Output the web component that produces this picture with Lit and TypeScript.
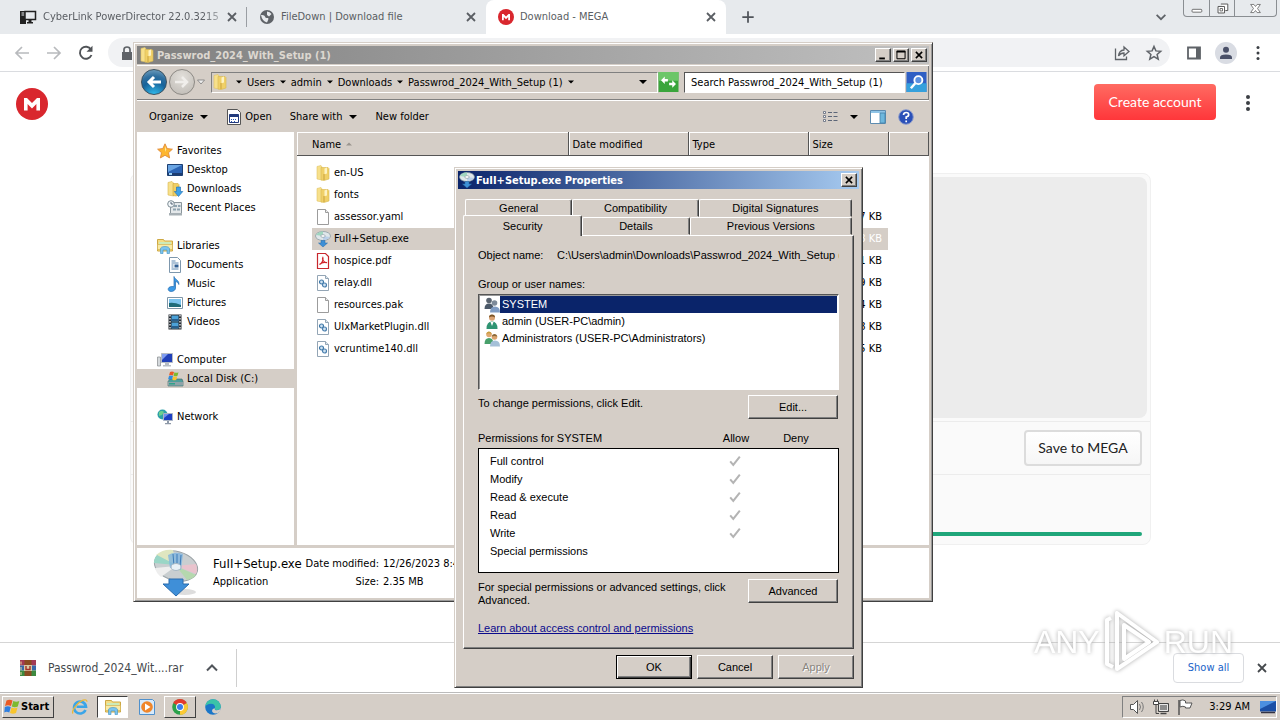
import { LitElement, html, css, svg, TemplateResult } from "lit";
import { customElement } from "lit/decorators.js";
import { classMap } from "lit/directives/class-map.js";

const shape = (name: string) => {
  switch (name) {
    case "folder":
      return svg`<path d="M2 1.500 6 .5 7 2v13l-5-1z" fill="#f7e08b" stroke="#e0c566" stroke-width=".6"/><path d="M6 2.500h7l1 1V14l-5 1.500-3-.5z" fill="#f0d068" stroke="#d8b850" stroke-width=".6"/><path d="M9.500 3.500 12 2.500v6l-2.500.8z" fill="#fdf3c4"/><path d="M9 9v6" stroke="#b98f2c" stroke-width=".7"/>`;
    case "file":
      return svg`<path d="M2.500.5h8l3 3v12h-11z" fill="#fff" stroke="#9c9c9c"/><path d="M10.500.5v3h3" fill="#eee" stroke="#9c9c9c"/>`;
    case "dll":
      return svg`<path d="M2.500.5h8l3 3v12h-11z" fill="#fff" stroke="#93a5b5"/><path d="M10.500.5v3h3" fill="#dfe8ef" stroke="#93a5b5"/><circle cx="6.500" cy="7" r="2" fill="#cfe2f2" stroke="#3f78a8" stroke-width="1.200"/><circle cx="9.500" cy="10" r="2" fill="#cfe2f2" stroke="#4a7fae" stroke-width="1.200"/>`;
    case "pdf":
      return svg`<path d="M2.500.5h8l3 3v12h-11z" fill="#fff" stroke="#c8272d" stroke-width="1.200"/><path d="M4.500 11.500c3-1.500 4-5 3.300-7-.9 1.200.5 5.200 4.200 5.200-2.500-.8-5.500-.2-7.500 1.800z" fill="none" stroke="#d2232a" stroke-width="1.200"/>`;
    case "disc":
      return svg`<ellipse cx="8" cy="5" rx="7.500" ry="4.500" fill="#dfe7ea" stroke="#83949c" stroke-width=".7"/><path d="M1 4q3-4 7-3.500L8 5z" fill="#9fd6bf"/><path d="M15 6q-3 3.500-7 3.200L8 5z" fill="#b9cfe9"/><ellipse cx="8" cy="5" rx="2.200" ry="1.400" fill="#fff" stroke="#7c8f99" stroke-width=".6"/><path d="M6 9.500h4v2.500h2.500L8 16l-4.500-4H6z" fill="#3d8fd6" stroke="#2768a6" stroke-width=".5"/>`;
    case "star":
      return svg`<path d="m8 .8 2.200 4.800 5.200.6-3.900 3.500 1.100 5.200L8 12.300l-4.600 2.600 1.100-5.200L.6 6.200l5.200-.6z" fill="#fdb62f" stroke="#e08a3a" stroke-width=".9"/><path d="m8 3 1.200 3.500L8 9z" fill="#ffe9a3"/>`;
    case "desktop":
      return svg`<path d="M.5 2.500h15v11H.5z" fill="#2c64b4" stroke="#1c3f72"/><path d="M1 3h14L1 10z" fill="#6aa5e3"/><path d="M1 11h14v2H1z" fill="#1d3c70"/><path d="M2 11h3v2H2z" fill="#9ad0f5"/>`;
    case "downloads":
      return svg`<path d="M1 1.500 5 .5 6.500 2v13L1 14z" fill="#f7e08b" stroke="#d9b64a" stroke-width=".6"/><path d="M6 2.500h5l1 1V14l-3 1-3-.5z" fill="#f0cf63" stroke="#cfa63a" stroke-width=".6"/><path d="M9.500 6h4v4.500h2.300L11.500 15.500 7.300 10.500h2.200z" fill="#3fa2e8" stroke="#1b6cb0" stroke-width=".6"/>`;
    case "recent":
      return svg`<path d="M3.500 2.500h11v11h-11z" fill="#e4e8ea" stroke="#8a959b"/><path d="M2 13h13v2.500H2z" fill="#a7b0b5"/><path d="M7 5h3v2H7zM11 5h2.500v2H11zM6 8.500h3v2H6zM10 8.500h3v2h-3z" fill="#8fa3af"/><circle cx="4" cy="4" r="3.300" fill="#f2f7fa" stroke="#7e8c94"/><path d="M4 2v2h2" stroke="#345" fill="none" stroke-width=".8"/>`;
    case "libraries":
      return svg`<path d="M.5 1.500h6l1 1.500h8v10H.5z" fill="#f5dc84" stroke="#cda844"/><path d="M2 4h12v3H2z" fill="#cdebb9"/><path d="M.5 6.500h15v5H.5z" fill="#faeaa6" stroke="#d3b355" stroke-width=".7"/><path d="M3.500 15.500V11q0-2.500 4.500-2.500t4.500 2.500v4.500H10V12H6v3.500z" fill="#7cc4ee" stroke="#3c92c4" stroke-width=".6"/>`;
    case "documents":
      return svg`<path d="M2.500.5h8l3 3v12h-11z" fill="#fff" stroke="#7d97ad"/><path d="M4.500 4h4M4.500 6h7M4.500 8h2M4.500 10h2M4.500 12h7" stroke="#5c87b0"/><path d="M7.500 7.500h4v3h-4z" fill="#315f93"/>`;
    case "music":
      return svg`<path d="M7 .5c.5 3 5.500 3.500 4.800 8-.6-2-2-2.700-3.300-3V12c0 2-2 3.500-4.300 3.500S.8 14 1.300 12.500 4 10 7 10.700z" fill="#3b9ae6" stroke="#1f68b0" stroke-width=".7"/>`;
    case "pictures":
      return svg`<path d="M.5 2.500h15v11H.5z" fill="#fff" stroke="#7f96a8"/><path d="M2 4h12v8H2z" fill="#7cc4ee"/><path d="M2 8q5-1 12 2v2H2z" fill="#1e6b79"/>`;
    case "videos":
      return svg`<path d="M1.500.5h13v15h-13z" fill="#262c33"/><path d="M4.500 1.500h7v6h-7zM4.500 8.500h7v6h-7z" fill="#4ba1d8"/><path d="M4.500 5h7v2h-7zM4.500 12h7v2h-7z" fill="#285f8d"/><path d="M3 1v14M13 1v14" stroke="#fff" stroke-dasharray="1.500 1.500" stroke-width="1.200"/>`;
    case "computer":
      return svg`<path d="M.5 5h3v9h-3z" fill="#d5d9dc" stroke="#85898d" stroke-width=".7"/><path d="M4.500 1.500h11v9h-11z" fill="#2140b8" stroke="#b6bcc4"/><path d="M5 2h6L5 8z" fill="#7f9cf0"/><path d="M8 11h4v2h2v1.500H6V13h2z" fill="#b8bec5"/>`;
    case "disk":
      return svg`<path d="M1 10.500 3 8h12l1 2.500V15H1z" fill="#4f9e9c" stroke="#3c6467" stroke-width=".6"/><path d="M1 11h15v3.500H1z" fill="#8fa3a8"/><path d="M2 12h6v1.500H2z" fill="#2fa38b"/><path d="M3 1q2-1 4 0L6 4.500q-2-1-4 0z" fill="#ea5a24"/><path d="M7.500 1.200q2 1 4 0l-1 3.500q-2 1-4 0z" fill="#7dba2f"/><path d="M2 5q2-1 4 0L5 8.500q-2-1-4 0z" fill="#2f8ce0"/><path d="M6.300 5.200q2 1 4 0l-1 3.500q-2 1-4 0z" fill="#f8c42c"/>`;
    case "network":
      return svg`<circle cx="5.500" cy="5.500" r="5" fill="#2da0a8"/><path d="M2 3q3-2 5 0L5 6 2 7zM6 8l3-1v3z" fill="#6dd08e"/><path d="M6.500 4.500h9v7h-9z" fill="#1d3fc4" stroke="#aab4c4"/><path d="M7 5h5L7 9z" fill="#6f90ee"/><path d="M10 12h2v2h2v1.200H8V14h2z" fill="#8e99a8"/>`;
    case "open":
      return svg`<path d="M1.500.5h10l3 3v12h-13z" fill="#fff" stroke="#555"/><path d="M3.500 5.500h9v8h-9z" fill="#fff" stroke="#223a7d"/><path d="M3.500 5.500h9V8h-9z" fill="#223a7d"/><path d="M5 10h1v1H5zM7 10h1v1H7zM9 10h1v1H9zM5 12h1v1H5zM8 12h1v1H8z" fill="#2a57b5"/>`;
    case "group":
      return svg`<path d="M0 0h16v16H0z" fill="#fff"/><circle cx="5" cy="3.500" r="2.800" fill="#59636f"/><path d="M.5 12q0-5.500 4.500-5.500T9.500 12z" fill="#4b5969"/><circle cx="10.500" cy="6" r="2.800" fill="#7d8a99"/><path d="M6 15.500q0-6 5-6t5 6z" fill="#7f9cc4"/>`;
    case "user":
      return svg`<circle cx="8" cy="3.800" r="3" fill="#d9a273"/><path d="M5 3.500Q5 .5 8 .5t3 3Q8 1.500 5 3.500z" fill="#7a5426"/><path d="M2.500 15q0-7.500 5.500-7.500t5.500 7.500z" fill="#2f9472"/><path d="m6.500 8 1.500 4 1.500-4z" fill="#fff"/>`;
    case "admins":
      return svg`<circle cx="5" cy="3.500" r="2.800" fill="#e0a970"/><path d="M2.200 3Q3 .3 5 .5t2.800 2.500Q5 1.500 2.200 3z" fill="#c79c3c"/><path d="M.5 13q0-6 4.500-6t4.500 6z" fill="#48a06b"/><circle cx="10.500" cy="6" r="2.800" fill="#dba36c"/><path d="M7.700 5.500q.5-2.500 2.800-2.500t2.800 2.500q-2.800-1-5.600 0z" fill="#8a6a3c"/><path d="M6 15.500q0-6 5-6t5 6z" fill="#a5c0d8"/>`;
    case "mega":
      return svg`<circle cx="8" cy="8" r="8" fill="#d9272e"/><path d="M4 11.200V5h1.500L8 7.500 10.500 5H12v6.200h-1.800V8L8 10.200 5.800 8v3.200z" fill="#fff"/>`;
    case "pc":
      return svg`<path d="M0 2h6v13H0z" fill="#222"/><path d="M1.500 4h3M1.500 6h3" stroke="#e7eaed"/><path d="M5 2.500h10.500v8H5z" fill="#e7eaed" stroke="#222" stroke-width="1.500"/><path d="M8.500 11h3v2h1.500v1.500H7V13h1.500z" fill="#222"/>`;
    case "globe":
      return svg`<circle cx="8" cy="8" r="7" fill="#5f6368"/><path d="M2 6q3.500-.5 4 1.500t2.500 1.500-.5 4.500Q3 12 2 6zM8 2.500q3 0 4.500 2.500L10 7.500 8 6z" fill="#e7eaed"/>`;
    case "rar":
      return svg`<path d="M0 0h16v5.500H0z" fill="#a33a55"/><path d="M0 5.500h16v5H0z" fill="#3967a9"/><path d="M0 10.500h16V16H0z" fill="#3d8a40"/><path d="M1 1.500v3M1 7v3M1 12v3" stroke="#e9d9a3"/><path d="M4.500 0h7v16h-7z" fill="#8a4b22"/><path d="M4 5h8v6H4z" fill="#d9c9a6"/><path d="M6 6v3.500h4V6" fill="none" stroke="#a3302a" stroke-width="1.400"/>`;
    case "flag7":
      return svg`<path d="M2.500 1.500q3-1.500 6 0L7 7Q4 5.500 1 7z" fill="#ea5a24"/><path d="M9.300 2q3 1.500 6 0l-1.500 5.500q-3 1.500-6 0z" fill="#7dba2f"/><path d="M.8 8q3-1.500 6 0l-1.500 5.500q-3-1.500-5 0z" fill="#2f7fe0"/><path d="M7.500 8.500q3 1.500 6 0L12 14q-3 1.500-6 0z" fill="#f8c42c"/>`;
    case "ie":
      return svg`<path d="M13.500 11A6 6 0 1 1 14 7.800H4.500" fill="none" stroke="#3ba5e8" stroke-width="2.600"/><path d="M1 14.500C-1 12 5 3.500 11 1.200q4-1.200 4 1.600" fill="none" stroke="#e9b83a" stroke-width="1.300"/>`;
    case "player":
      return svg`<path d="M.5.500h13l2 2v13H.5z" fill="#d7eafb" stroke="#4f90cc"/><circle cx="8" cy="8" r="5.800" fill="#f0862a"/><path d="m6 4.500 5.500 3.500L6 11.500z" fill="#fff"/>`;
    case "chrome":
      return svg`<circle cx="8" cy="8" r="7.800" fill="#2ba14b"/><path d="M8 8 1.200 4.100A7.800 7.800 0 0 1 14.800 4.100z" fill="#e33b2e"/><path d="M8 8 14.800 4.100A7.800 7.800 0 0 1 8 15.800z" fill="#fcc934"/><circle cx="8" cy="8" r="3.900" fill="#fff"/><circle cx="8" cy="8" r="3" fill="#3b7ded"/>`;
    case "edge":
      return svg`<circle cx="8" cy="8" r="7.800" fill="#1b76c8"/><path d="M.3 7A7.800 7.800 0 0 1 15.800 7.500q0 3.500-4 3.500-2.300 0-2-1.500 1-3-2-4.500Q4 4 .3 7z" fill="#3ac3a8"/><path d="M15.800 9q-1 2.300-4 2.300-2.500 0-2-2-3.500.5-2.500 3.700 2 2.500 6.200.7Q15.500 12 15.800 9z" fill="#d5cec7"/>`;
    case "view":
      return svg`<path d="M1.500 2.500h2v2h-2zM1.500 6.500h2v2h-2zM1.500 10.500h2v2h-2z" fill="#fff" stroke="#5c6678" stroke-width=".8"/><path d="M6 3.500h4M11.500 3.500h4M6 7.500h4M11.500 7.500h4M6 11.500h4M11.500 11.500h4" stroke="#5c6678"/>`;
    case "preview":
      return svg`<path d="M.5 1.500h15v13H.5z" fill="#fff" stroke="#5d8cb0"/><path d="M1 2h14v2H1z" fill="#8fc4e6"/><path d="M10 4h5v10h-5z" fill="#6db7dd" stroke="#4580a8" stroke-width=".8"/>`;
    case "help":
      return svg`<circle cx="8" cy="8" r="7.300" fill="#2a50b8" stroke="#8c9ccc"/><path d="M5.500 6q.2-2.500 2.700-2.500t2.500 2.200Q10.700 7.300 8.200 8v2M8.200 11.500v1.700" fill="none" stroke="#fff" stroke-width="1.700"/>`;
    case "lock":
      return svg`<path d="M3 7h10v8H3z" fill="#5f6368"/><path d="M5 7V4.500Q5 2 8 2t3 2.500V7" fill="none" stroke="#5f6368" stroke-width="1.700"/>`;
    case "back":
      return svg`<path d="M15 8H2M8 2 2 8l6 6" fill="none" stroke="#b8babd" stroke-width="1.700"/>`;
    case "forward":
      return svg`<path d="M1 8h13M8 2l6 6-6 6" fill="none" stroke="#b8babd" stroke-width="1.700"/>`;
    case "reload":
      return svg`<path d="M13.500 10A6 6 0 1 1 13 4.500" fill="none" stroke="#505357" stroke-width="1.900"/><path d="M14.500.8v6h-6z" fill="#505357"/>`;
    case "share":
      return svg`<path d="M1.500 3.500v11h11v-3" fill="none" stroke="#5f6368" stroke-width="1.300"/><path d="M4.500 11q.5-5.500 5.500-6V2l5 4.500-5 4.300V8Q6.500 8 4.500 11z" fill="none" stroke="#5f6368" stroke-width="1.300"/>`;
    case "bookmark":
      return svg`<path d="m8 1.500 1.900 4.400 4.800.4-3.600 3.200 1.100 4.700L8 11.700l-4.200 2.500 1.100-4.700L1.300 6.300l4.800-.4z" fill="none" stroke="#5f6368" stroke-width="1.500"/>`;
    case "side":
      return svg`<path d="M2 2.500h12v11H2z" fill="none" stroke="#5f6368" stroke-width="1.800"/><path d="M10 2h4v12h-4z" fill="#5f6368"/>`;
    case "person":
      return svg`<circle cx="8" cy="4.800" r="3" fill="#4a5068"/><path d="M2 14v-1.500Q2 9.500 8 9.500t6 3V14z" fill="#4a5068"/>`;
    case "dots":
      return svg`<circle cx="8" cy="2.500" r="1.500"/><circle cx="8" cy="8" r="1.500"/><circle cx="8" cy="13.500" r="1.500"/>`;
    case "bigdots":
      return svg`<circle cx="8" cy="3" r="2"/><circle cx="8" cy="9" r="2"/><circle cx="8" cy="15" r="2"/>`;
    case "x":
      return svg`<path d="m4 4 8 8M12 4l-8 8" stroke="currentColor" stroke-width="1.800"/>`;
    case "xbold":
      return svg`<path d="m3 3 10 10M13 3 3 13" stroke="#000" stroke-width="2.500"/>`;
    case "min":
      return svg`<path d="M2 12h9v3H2z" fill="#000"/>`;
    case "max":
      return svg`<path d="M1.500 2h13v12h-13z" fill="none" stroke="#000" stroke-width="1.600"/><path d="M1 2.500h14" stroke="#000" stroke-width="3"/>`;
    case "plus":
      return svg`<path d="M8 1.500v13M1.500 8h13" stroke="#50545a" stroke-width="2"/>`;
    case "down":
      return svg`<path d="m3 5.500 5 5 5-5" fill="none" stroke="#5f6368" stroke-width="2"/>`;
    case "up":
      return svg`<path d="m3 10.500 5-5 5 5" fill="none" stroke="#50545a" stroke-width="2"/>`;
    case "caret":
      return svg`<path d="M0 4h16l-8 8z" fill="#000"/>`;
    case "hollow":
      return svg`<path d="M1 4h14l-7 8z" fill="#eee" stroke="#777" stroke-width="1.500"/>`;
    case "sort":
      return svg`<path d="M0 12h16L8 4z" fill="#9a958f"/>`;
    case "swap":
      return svg`<path d="M0 0h16v16H0z" fill="#3aa53c"/><path d="M0 0h16v7H0z" fill="#6cc668"/><path d="M2 6.500 5 3.500v2h2.500v2H5v2zM14 9.500l-3-3v2H8.500v2H11v2z" fill="#fff"/>`;
    case "find":
      return svg`<path d="M0 0h16v16H0z" fill="#2f5fc4"/><path d="M0 9h16v7H0z" fill="#35a0dc"/><circle cx="9.500" cy="6.500" r="3.200" fill="#5a90e0" stroke="#fff" stroke-width="1.500"/><path d="m7 9-3.500 4" stroke="#fff" stroke-width="2"/>`;
    case "tick":
      return svg`<path d="m2.500 8.500 3.500 4L13.500 3" fill="none" stroke="#b4b4b4" stroke-width="2.300"/>`;
    case "wmin":
      return svg`<rect x="2.500" y="9" width="12" height="3.500" rx="1" fill="#fff" stroke="#555"/>`;
    case "wmax":
      return svg`<path d="M6 2.500h8.500v8h-3" fill="#fff" stroke="#555" stroke-width="1.200"/><path d="M2.500 5.500h8v8h-8z" fill="#fff" stroke="#555" stroke-width="1.200"/><path d="M5 8h3v3H5z" fill="none" stroke="#555"/>`;
    case "wclose":
      return svg`<path d="M2 3h4L8 5.500 10 3h4l-3.500 5 3.500 5h-4L8 10.500 6 13H2l3.500-5z" fill="#fff" stroke="#666"/>`;
    case "sound":
      return svg`<path d="M1.500 5.500h3l4-4v13l-4-4h-3z" fill="#fff" stroke="#555"/><path d="M10.500 5q2 3 0 6M12.500 3q3.500 5 0 10" fill="none" stroke="#777"/>`;
    case "lan":
      return svg`<path d="M5.500 4.500h10v8h-10z" fill="#8c8c8c" stroke="#444"/><path d="M6.500 5.500h8v6h-8z" fill="none" stroke="#fff" stroke-width=".8"/><path d="M7.500 14.500h6" stroke="#444" stroke-width="1.500"/><path d="M.5 2.500h5v3h-5z" fill="#fff" stroke="#444"/><path d="M1.500.5v2M4.500.5v2M3 5.500v9h3" stroke="#444" fill="none"/>`;
    case "flag":
      return svg`<path d="M2 1v15" stroke="#555" stroke-width="1.500"/><path d="M3 1.500q3-1.500 5.500.5V4q3 0 6.500 0l-2 5H8.500V8Q6 6.500 3 8z" fill="#fff" stroke="#555"/>`;
    case "show":
      return svg`<path d="M0 2h16v10.500H0z" fill="#1b4fa5"/><path d="M0 2h16L0 10z" fill="#4b8fe0"/><path d="M1 13.500h14" stroke="#334" stroke-width="1.500"/>`;
    default:
      return svg``;
  }
};

const icon = (name: string, extra = ""): TemplateResult =>
  html`<svg class="icon ${extra}" viewBox="0 0 16 16" aria-hidden="true">${shape(name)}</svg>`;

const base = css`
  * { box-sizing: border-box; }
  button, input, ul, li, p, h1, h2, table, td, th { margin: 0; padding: 0; font: inherit; color: inherit; text-align: inherit; }
  button { border: 0; background: none; white-space: nowrap; }
  ul { list-style: none; }
  a { color: inherit; text-decoration: none; }
  .icon { width: 16px; height: 16px; flex: none; display: block; overflow: visible; }
  .icon.small { width: 6px; height: 6px; }
  .icon.tiny { width: 8px; height: 8px; }
  .icon.tight { width: 10px; height: 10px; }
  .caption { display: flex; align-items: center; height: 18px; gap: 2px; padding: 0 2px; font-weight: bold; white-space: nowrap; }
  .caption h2 { flex: 1; font-size: 11px; }
  .box { width: 16px; height: 14px; display: grid; place-items: center; background: #d5cec7; border: 1px solid; border-color: #fff #404040 #404040 #fff; box-shadow: inset -1px -1px #808080; }
`;

@customElement("explorer-window")
export class ExplorerWindow extends LitElement {
  static styles = [base, css`
    :host { display: flex; flex-direction: column; background: #d5cec7; padding: 3px; border: 1px solid; border-color: #d5cec7 #404040 #404040 #d5cec7; box-shadow: inset 1px 1px #fff, inset -1px -1px #999; font: 11px/13px "DejaVu Sans Condensed", "DejaVu Sans", sans-serif; color: #000; }
    .caption { background: linear-gradient(90deg, #808080, #c0c0c0); color: #dcd7d0; }
    .nav { display: flex; align-items: center; height: 35px; margin-top: 1px; padding: 0 2px 0 4px; border-bottom: 1px solid #808080; box-shadow: 0 1px #fff, inset 0 1px #fff, inset -1px 0 #808080; }
    .round { width: 26px; height: 26px; margin-right: 2px; border-radius: 50%; display: grid; place-items: center; border: 1px solid #39505f; background: radial-gradient(circle at 50% 110%, #2fb4e6 10%, #17639a 50%, #2f6f9f 70%, #7fa9c4); }
    .round.off { border-color: #8c8984; background: radial-gradient(circle at 50% 30%, #e2dfda, #bdb9b3); }
    .address { flex: 1; display: flex; align-items: center; gap: 5px; height: 21px; margin-left: 6px; padding-right: 10px; border: 1px solid; border-color: #808080 #fff #fff #808080; }
    .address button { display: flex; align-items: center; gap: 5px; }
    .address .fold { margin-right: 3px; }
    .fill { flex: 1; }
    .square { margin-right: 5px; }
    .square .icon { width: 21px; height: 20px; }
    .search { width: 221px; height: 21px; margin-right: 1px; padding: 0 6px; background: #fff; border: 1px solid; border-color: #555 #fff #fff #555; outline: 0; font: inherit; }
    .go { margin: 0; }
    .tools { display: flex; align-items: center; height: 31px; margin-top: 1px; padding: 0 15px 0 12px; }
    .tools button { display: flex; align-items: center; gap: 7px; margin-right: 18px; }
    .tools button.open { gap: 3px; }
    .views { display: flex; gap: 12px; }
    .tools .views button { gap: 12px; margin-right: 0; }
    .body { flex: 1; display: flex; min-height: 0; }
    .tree { width: 157px; padding-top: 9px; background: #fff; }
    .tree ul { margin-bottom: 19px; }
    .tree a { display: flex; align-items: center; gap: 4px; height: 19px; padding-left: 30px; white-space: nowrap; }
    .tree a.root { padding-left: 20px; }
    .tree a.current { background: #d5cec7; }
    .list { flex: 1; margin-left: 3px; background: #fff; }
    table { width: 100%; border-collapse: collapse; table-layout: fixed; }
    th { height: 23px; padding-left: 4px; font-weight: normal; background: #d5cec7; border-right: 1px solid #555; border-bottom: 1px solid #555; border-top: 1px solid #fff; box-shadow: inset 1px 0 #fff; vertical-align: middle; }
    th:first-child { padding-left: 15px; }
    th .inner, td .inner { display: flex; align-items: center; gap: 5px; }
    td { height: 22px; padding: 0 4px; white-space: nowrap; vertical-align: middle; }
    td:first-child { padding: 0 0 0 15px; }
    td .inner { gap: 3px; padding-left: 3px; height: 22px; }
    td.size { text-align: right; padding-right: 6px; }
    .lead td { height: 6px; }
    .picked td:not(:last-child) { background: #d5cec7; color: #fff; }
    .picked td:first-child { background: linear-gradient(#d5cec7, #d5cec7) 15px 0 no-repeat; color: #000; }
    .w1 { width: 271px; } .w2 { width: 120px; } .w3 { width: 120px; } .w4 { width: 80px; }
    .details { display: flex; align-items: center; gap: 14px; height: 50px; margin-top: 3px; padding-left: 16px; background: #fff; }
    .details .art { width: 46px; height: 48px; }
    .facts { display: grid; grid-template-columns: auto auto 1fr; column-gap: 4px; line-height: 18px; white-space: nowrap; }
    .facts .name { font-size: 13px; }
    .facts .key { text-align: right; }
  `];

  groups = [
    [["star", "Favorites"], ["desktop", "Desktop"], ["downloads", "Downloads"], ["recent", "Recent Places"]],
    [["libraries", "Libraries"], ["documents", "Documents"], ["music", "Music"], ["pictures", "Pictures"], ["videos", "Videos"]],
    [["computer", "Computer"], ["disk", "Local Disk (C:)"]],
    [["network", "Network"]],
  ];

  files = [
    ["folder", "en-US", "12/26/2023 8:45 AM", "File folder", ""],
    ["folder", "fonts", "", "", ""],
    ["file", "assessor.yaml", "", "", "7 KB"],
    ["disc", "FuII+Setup.exe", "", "", "8 KB"],
    ["pdf", "hospice.pdf", "", "", "1 KB"],
    ["dll", "relay.dll", "", "", "9 KB"],
    ["file", "resources.pak", "", "", "4 KB"],
    ["dll", "UIxMarketPlugin.dll", "", "", "8 KB"],
    ["dll", "vcruntime140.dll", "", "", "5 KB"],
  ];

  render() {
    return html`
      <div class="caption">
        ${icon("folder")}<h2>Passwrod_2024_With_Setup (1)</h2>
        <button class="box" aria-label="Minimize">${icon("min", "tight")}</button>
        <button class="box" aria-label="Maximize">${icon("max", "tight")}</button>
        <button class="box" aria-label="Close">${icon("xbold", "tight")}</button>
      </div>
      <div class="nav">
        <button class="round" aria-label="Back"><svg class="icon" viewBox="0 0 16 16"><path d="M15 8H4M8 3 3 8l5 5" fill="none" stroke="#fff" stroke-width="3"/></svg></button>
        <button class="round off" aria-label="Forward"><svg class="icon" viewBox="0 0 16 16"><path d="M1 8h11M8 3l5 5-5 5" fill="none" stroke="#f0eeeb" stroke-width="2.500"/></svg></button>
        ${icon("hollow", "tiny")}
        <div class="address">
          ${icon("folder", "fold")}${icon("caret", "small")}
          ${["Users", "admin", "Downloads", "Passwrod_2024_With_Setup (1)"].map((p) => html`<button>${p}${icon("caret", "small")}</button>`)}
          <span class="fill"></span>${icon("caret", "tiny")}
        </div>
        <button class="square" aria-label="Refresh">${icon("swap")}</button>
        <input class="search" aria-label="Search" value="Search Passwrod_2024_With_Setup (1)" />
        <button class="square go" aria-label="Go">${icon("find")}</button>
      </div>
      <div class="tools">
        <button>Organize ${icon("caret", "tiny")}</button>
        <button class="open">${icon("open")} Open</button>
        <button>Share with ${icon("caret", "tiny")}</button>
        <button>New folder</button>
        <span class="fill"></span>
        <div class="views">
          <button aria-label="Change view">${icon("view")}${icon("caret", "tiny")}</button>
          <button aria-label="Preview pane">${icon("preview")}</button>
          <button aria-label="Help">${icon("help")}</button>
        </div>
      </div>
      <div class="body">
        <nav class="tree">
          ${this.groups.map((g) => html`<ul>${g.map(([i, t], n) => html`<li><a href="#" class=${classMap({ root: n === 0, current: i === "disk" })}>${icon(i)}${t}</a></li>`)}</ul>`)}
        </nav>
        <div class="list">
          <table>
            <colgroup><col class="w1" /><col class="w2" /><col class="w3" /><col class="w4" /><col /></colgroup>
            <thead><tr><th><span class="inner">Name ${icon("sort", "small")}</span></th><th>Date modified</th><th>Type</th><th>Size</th><th></th></tr></thead>
            <tbody>
              <tr class="lead"><td colspan="5"></td></tr>
              ${this.files.map(([i, n, d, t, s]) => html`<tr class=${classMap({ picked: i === "disc" })}><td><span class="inner">${icon(i)}${n}</span></td><td>${d}</td><td>${t}</td><td class="size">${s}</td><td></td></tr>`)}
            </tbody>
          </table>
        </div>
      </div>
      <div class="details">
        <svg class="art" viewBox="0 0 46 48" aria-hidden="true">
          <ellipse cx="32" cy="43" rx="11" ry="3" fill="#ddd"/>
          <ellipse cx="23" cy="17" rx="22" ry="14.500" transform="rotate(15 23 17)" fill="#c9ced0" stroke="#9aa2a6"/>
          <path d="M23 16 3 6Q10 0 20 1z" fill="#dfe6c0"/><path d="M23 16 1 14q0-5 3-8z" fill="#9ad6c6"/><path d="M23 17 43 15q2 6 0 10z" fill="#e9c3cd"/><path d="m23 17 20 9q-3 4-9 5z" fill="#b5d8ae"/><path d="M23 17 8 28q-5-4-6-9z" fill="#eee"/>
          <path d="M15 6q7-4 15-1l-2 16-11-2z" fill="#7fb4de" opacity=".8"/><path d="m20 5 1 12M24 5v13M28 6l-1 12" stroke="#3d7cb8"/>
          <ellipse cx="23" cy="18" rx="5" ry="3.500" fill="#e8f1f7" stroke="#a8b8c4"/>
          <path d="M16 30h14v5h6L23 47 10 35h6z" fill="#3f8fd8" stroke="#2a6cae"/>
        </svg>
        <div class="facts">
          <span class="name">FuII+Setup.exe</span><span class="key">Date modified:</span><span>12/26/2023 8:45 AM</span>
          <span>Application</span><span class="key">Size:</span><span>2.35 MB</span>
        </div>
      </div>`;
  }
}

@customElement("properties-dialog")
export class PropertiesDialog extends LitElement {
  static styles = [base, css`
    :host { display: block; background: #d5cec7; padding: 3px; border: 1px solid; border-color: #d5cec7 #404040 #404040 #d5cec7; box-shadow: inset 1px 1px #fff, inset -1px -1px #808080; font: 11px/13px "Liberation Sans", Arial, sans-serif; color: #000; }
    .caption { gap: 1px; padding-left: 1px; background: linear-gradient(90deg, #0a246a, #a6caf0); color: #fff; font-family: "DejaVu Sans Condensed", "DejaVu Sans", sans-serif; }
    .content { padding: 10px 5px 5px; }
    .tabs { display: flex; padding: 0 2px; }
    .tabs button { flex: 1 1 126px; height: 18px; text-align: center; border: 1px solid; border-color: #fff #404040 transparent #fff; border-radius: 2px 2px 0 0; box-shadow: inset -1px 0 #808080; }
    .tabs button.slim { flex-basis: 107px; }
    .tabs button.wide { flex-basis: 153px; }
    .tabs.front { padding-left: 0; }
    .tabs button.picked { position: relative; flex-basis: 119px; height: 21px; margin: -2px 0 -1px; background: #d5cec7; border-bottom: 0; }
    .tabs button.wide.low { flex-basis: 162px; }
    .panel { padding: 13px 14px 12px; border: 1px solid; border-color: #fff #404040 #404040 #fff; box-shadow: inset -1px -1px #808080; height: 414px; }
    .object { display: grid; grid-template-columns: 79px 1fr; align-items: center; }
    .object input { width: 100%; min-width: 0; border: 0; background: none; outline: 0; }
    .title { margin-top: 16px; }
    .users { height: 96px; margin-top: 3px; padding: 1px; background: #fff; border: 1px solid; border-color: #555 #fff #fff #555; box-shadow: inset 1px 1px #999; }
    .users li { display: flex; align-items: center; height: 17px; padding-left: 4px; }
    .users li span { flex: 1; padding-left: 2px; line-height: 17px; }
    .users .picked span { background: #0a246a; color: #fff; }
    .line { display: flex; justify-content: space-between; padding-right: 1px; margin-top: 6px; }
    .line.first { margin-top: 5px; }
    .line p { padding-top: 2px; width: 250px; }
    .push { width: 90px; height: 24px; text-align: center; background: #d5cec7; border: 1px solid; border-color: #fff #404040 #404040 #fff; box-shadow: inset -1px -1px #808080; }
    table, tbody, thead { display: block; }
    table { margin-top: 12px; }
    tr { display: grid; grid-template-columns: 1fr 60px 60px 13px; align-items: center; height: 18px; }
    thead tr { height: 17px; padding-bottom: 2px; }
    th { font-weight: normal; text-align: left; }
    thead th + th { text-align: center; }
    tbody { padding: 3px 0 12px; background: #fff; border: 1px solid #000; }
    tbody th { padding-left: 11px; }
    td { display: grid; justify-items: center; }
    td .icon { width: 14px; height: 14px; }
    .learn { display: inline-block; margin-top: 15px; color: #0a0a8c; text-decoration: underline; }
    .actions { display: flex; justify-content: flex-end; gap: 5px; margin-top: 6px; }
    .actions .push { width: 76px; }
    .actions .push:first-child { border-color: #000; box-shadow: inset 1px 1px #fff, inset -1px -1px #404040, inset -2px -2px #808080; }
    .push:disabled { color: #8a8680; text-shadow: 1px 1px #fff; }
  `];

  perms: [string, boolean][] = [["Full control", true], ["Modify", true], ["Read & execute", true], ["Read", true], ["Write", true], ["Special permissions", false]];

  render() {
    return html`
      <div class="caption">${icon("disc")}<h2>FuII+Setup.exe Properties</h2><button class="box" aria-label="Close">${icon("xbold", "tight")}</button></div>
      <div class="content">
        <div class="tabs"><button class="slim">General</button><button>Compatibility</button><button class="wide">Digital Signatures</button></div>
        <div class="tabs front"><button class="picked">Security</button><button class="slim">Details</button><button class="wide low">Previous Versions</button></div>
        <div class="panel">
          <div class="object"><label for="object">Object name:</label><input id="object" readonly value="C:\\Users\\admin\\Downloads\\Passwrod_2024_With_Setup (1)\\FuII+Setup.exe" /></div>
          <p class="title">Group or user names:</p>
          <ul class="users">
            <li class="picked">${icon("group")}<span>SYSTEM</span></li>
            <li>${icon("user")}<span>admin (USER-PC\\admin)</span></li>
            <li>${icon("admins")}<span>Administrators (USER-PC\\Administrators)</span></li>
          </ul>
          <div class="line first"><p>To change permissions, click Edit.</p><button class="push">Edit...</button></div>
          <table>
            <thead><tr><th>Permissions for SYSTEM</th><th>Allow</th><th>Deny</th></tr></thead>
            <tbody>${this.perms.map(([n, on]) => html`<tr><th>${n}</th><td>${on ? icon("tick") : ""}</td><td></td></tr>`)}</tbody>
          </table>
          <div class="line"><p>For special permissions or advanced settings, click Advanced.</p><button class="push">Advanced</button></div>
          <a class="learn" href="#">Learn about access control and permissions</a>
        </div>
        <div class="actions"><button class="push">OK</button><button class="push">Cancel</button><button class="push" disabled>Apply</button></div>
      </div>`;
  }
}

@customElement("app-root")
export class AppRoot extends LitElement {
  static styles = [base, css`
    :host { display: flex; flex-direction: column; position: relative; height: 100vh; overflow: hidden; background: #fff; color: #45494d; font: 12px/16px "DejaVu Sans Condensed", "DejaVu Sans", sans-serif; }
    .strip { display: flex; align-items: center; height: 34px; background: #e7eaed; padding-left: 8px; }
    .tab { display: flex; align-items: center; gap: 6px; width: 239px; height: 34px; padding: 0 7px 0 12px; font-size: 11px; white-space: nowrap; color: #5a5e63; }
    .tab span { flex: 1; }
    .tab.line { gap: 7px; border-right: 1px solid #8d9196; border-image: linear-gradient(transparent 8px, #9a9ea3 8px, #9a9ea3 26px, transparent 26px) 1; }
    .tab.line span { width: 0; }
    .tab.line button { margin-left: -7px; margin-right: -1px; }
    .tab.active { width: 240px; background: #fff; border-radius: 8px 8px 0 0; }
    .fade { mask-image: linear-gradient(90deg, #000 88%, #0004); }
    .newtab { margin-left: 15px; }
    .newtab .icon { width: 14px; height: 14px; }
    .fill { flex: 1; }
    .seek .icon { width: 14px; height: 14px; }
    .window { display: flex; align-self: flex-start; height: 17px; margin: 0 3px 0 15px; border: 1px solid #8a8e92; border-top: 0; border-radius: 0 0 4px 4px; }
    .window button { width: 25px; display: grid; place-items: center; }
    .window button + button { border-left: 1px solid #8a8e92; }
    .window button:last-child { width: 42px; }
    .window .icon { width: 13px; height: 13px; }
    .bar { display: flex; align-items: center; gap: 16px; height: 38px; padding: 0 14px; border-bottom: 1px solid #dadce0; }
    .omni { flex: 1; display: flex; align-items: center; gap: 16px; height: 29px; margin-left: -2px; padding: 0 8px 0 11px; border-radius: 15px; background: #f1f2f4; }
    .omni input { flex: 1; min-width: 0; border: 0; background: none; outline: 0; }
    .right { display: flex; align-items: center; gap: 13px; }
    .bar .dots, .menu { fill: #3b3f44; }
    .avatar { width: 22px; height: 22px; border-radius: 50%; background: #d9dce3; display: grid; place-items: center; }
    .page { flex: 1; min-height: 0; padding: 12px 24px 0 16px; font-family: Lato, "Open Sans", sans-serif; }
    .head { display: flex; align-items: center; gap: 24px; }
    .head .logo { width: 32px; height: 32px; align-self: flex-end; }
    .create { width: 122px; height: 36px; border-radius: 4px; background: linear-gradient(#ff6b62, #ff363a); color: #fff; text-align: center; font-size: 14px; }
    .card { width: calc(100% - 219px); margin: 53px 0 0 114px; border: 1px solid #f0f0f0; border-radius: 8px; background: #fafafa; }
    .shot { height: 241px; margin: 3px; border-radius: 8px; background: #ececec; }
    .save { display: flex; justify-content: flex-end; align-items: center; height: 54px; padding-right: 8px; border: 1px solid #ececec; border-width: 1px 0; }
    .save button { width: 118px; height: 36px; border: 2px solid #dcdcdc; border-radius: 4px; background: linear-gradient(#fff, #f6f6f6); text-align: center; font-size: 14px; color: #222; }
    .meter { height: 4px; margin: 57px 8px 8px; border-radius: 2px; background: #1fa67a; }
    .shelf { display: flex; align-items: center; height: 51px; padding: 0 10px 0 20px; border-top: 1px solid #d5d5d5; }
    .item { display: flex; align-items: center; gap: 12px; height: 38px; padding-right: 16px; border-right: 1px solid #cfcfcf; }
    .item .icon.up { margin-left: 9px; }
    .all { width: 71px; height: 30px; margin-right: 10px; border: 1px solid #dadce0; border-radius: 4px; color: #1a63c8; text-align: center; font-size: 11px; }
    .task { display: flex; align-items: center; height: 27px; padding: 0 3px 0 2px; background: #d5cec7; box-shadow: 0 -1px #bbb, inset 0 1px #fff; color: #000; font-size: 11px; }
    .start { display: flex; align-items: center; gap: 1px; width: 52px; height: 22px; padding-left: 1px; font-weight: bold; border: 1px solid; border-color: #fff #404040 #404040 #fff; }
    .app { width: 34px; height: 22px; display: grid; place-items: center; border: 1px solid transparent; }
    .start + .app { margin-left: 9px; }
    .app.pressed { width: 31px; margin-right: 2px; background: #fff; border-color: #404040 #fff #fff #404040; }
    .app.raised { width: 32px; border-color: #fff #404040 #404040 #fff; }
    .tray { display: flex; align-items: center; gap: 8px; height: 22px; padding: 0 0 0 6px; border: 1px solid; border-color: #808080 #fff #fff #808080; }
    .clock { padding: 0 2px 0 8px; }
    .brand { position: absolute; right: 47px; bottom: 46px; display: flex; align-items: center; gap: 4px; color: #fff; font: 32px/32px "Liberation Sans Narrow", "Liberation Sans", sans-serif; filter: drop-shadow(0 0 2px #aaa); pointer-events: none; }
    .brand svg { width: 56px; height: 64px; }
    explorer-window { position: absolute; left: 133px; top: 42px; width: 800px; height: 560px; }
    properties-dialog { position: absolute; left: 454px; top: 167px; width: 409px; }
  `];

  render() {
    return html`
      <header class="strip">
        <div class="tab line">${icon("pc")}<span class="fade">CyberLink PowerDirector 22.0.3215</span><button aria-label="Close tab">${icon("x")}</button></div>
        <div class="tab">${icon("globe")}<span>FileDown | Download file</span><button aria-label="Close tab">${icon("x")}</button></div>
        <div class="tab active">${icon("mega")}<span>Download - MEGA</span><button aria-label="Close tab">${icon("x")}</button></div>
        <button class="newtab" aria-label="New tab">${icon("plus")}</button>
        <span class="fill"></span>
        <button class="seek" aria-label="Search tabs">${icon("down")}</button>
        <div class="window"><button aria-label="Minimize">${icon("wmin")}</button><button aria-label="Restore">${icon("wmax")}</button><button aria-label="Close">${icon("wclose")}</button></div>
      </header>
      <div class="bar">
        <button aria-label="Back">${icon("back")}</button><button aria-label="Forward">${icon("forward")}</button><button aria-label="Reload">${icon("reload")}</button>
        <div class="omni">${icon("lock")}<input aria-label="Address" />${icon("share")}${icon("bookmark")}</div>
        <div class="right"><button aria-label="Side panel">${icon("side")}</button><button class="avatar" aria-label="Profile">${icon("person")}</button><button aria-label="Menu">${icon("dots", "dots")}</button></div>
      </div>
      <main class="page">
        <div class="head">${icon("mega", "logo")}<span class="fill"></span><button class="create">Create account</button><button aria-label="More">${icon("bigdots", "menu")}</button></div>
        <section class="card"><div class="shot"></div><div class="save"><button>Save to MEGA</button></div><div class="meter"></div></section>
      </main>
      <div class="shelf">
        <div class="item">${icon("rar")}<span>Passwrod_2024_Wit....rar</span>${icon("up", "up")}</div>
        <span class="fill"></span><button class="all">Show all</button><button aria-label="Close">${icon("x")}</button>
      </div>
      <footer class="task">
        <button class="start">${icon("flag7")}Start</button>
        <button class="app" aria-label="Internet Explorer">${icon("ie")}</button>
        <button class="app pressed" aria-label="Explorer">${icon("libraries")}</button>
        <button class="app" aria-label="Media Player">${icon("player")}</button>
        <button class="app raised" aria-label="Chrome">${icon("chrome")}</button>
        <button class="app" aria-label="Edge">${icon("edge")}</button>
        <span class="fill"></span>
        <div class="tray">${icon("sound")}${icon("lan")}${icon("flag")}<span class="clock">3:29 AM</span>${icon("show")}</div>
      </footer>
      <explorer-window></explorer-window>
      <properties-dialog></properties-dialog>
      <div class="brand">ANY<svg viewBox="0 0 56 64" aria-hidden="true"><path d="M13 3v56l40-27zM7 8 3 10v44l6 3M20 15v34l25-17z" fill="none" stroke="#fff" stroke-width="4" stroke-linejoin="round"/></svg>RUN</div>`;
  }
}
